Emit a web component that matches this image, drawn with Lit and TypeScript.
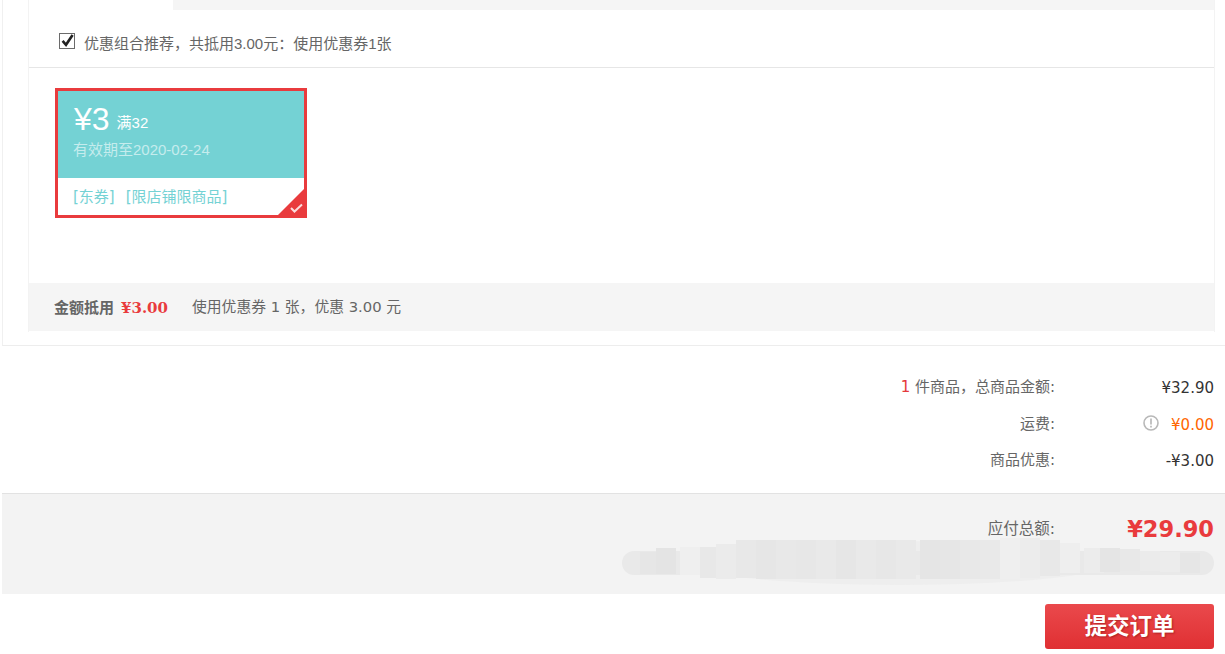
import { LitElement, html, css } from "lit";
import { customElement } from "lit/decorators.js";

// Mosaic columns of the blurred area: [left, top, height, colour]
const columns: [number, number, number, string][] = [
  [640, 552, 22, "#e6e6e6"], [656, 548, 26, "#e4e4e4"], [680, 547, 28, "#efefef"],
  [700, 547, 31, "#e8e8e8"], [716, 544, 35, "#ebebeb"], [736, 540, 38, "#e8e8e8"],
  [756, 540, 39, "#e6e6e6"], [776, 540, 39, "#e8e8e8"], [796, 540, 39, "#e7e7e7"],
  [816, 540, 39, "#e9e9e9"], [836, 540, 39, "#e6e6e6"], [856, 540, 39, "#e9e9e9"],
  [876, 540, 39, "#e7e7e7"], [896, 540, 39, "#e9e9e9"], [920, 540, 39, "#e5e5e5"],
  [940, 540, 39, "#e6e6e6"], [960, 540, 39, "#e8e8e8"], [980, 540, 39, "#e9e9e9"],
  [1000, 538, 41, "#efefef"], [1020, 538, 40, "#ececec"], [1040, 540, 36, "#e8e8e8"],
  [1060, 543, 30, "#eeeeee"], [1084, 548, 25, "#ececec"], [1100, 548, 24, "#e5e5e5"],
  [1120, 549, 22, "#e8e8e8"], [1140, 551, 20, "#ebebeb"], [1160, 552, 20, "#ececec"],
  [1180, 553, 20, "#e6e6e6"],
];

@customElement("app-root")
export class AppRoot extends LitElement {
  static styles = css`
    :host {
      display: block;
      width: 1225px;
      height: 654px;
      overflow: hidden;
      background: #fff;
      font-family: "DejaVu Sans", "Noto Sans CJK SC", sans-serif;
      font-size: 15px;
      color: #666;
      position: relative;
    }
    .panel {
      margin-left: 2px;
      height: 346px;
      box-sizing: border-box;
      border-left: 1px solid #f0f0f0;
      border-bottom: 1px solid #ededed;
      padding-left: 25px;
      padding-right: 10px;
    }
    .inner {
      height: 332px;
      box-sizing: border-box;
      border-left: 1px solid #f3f3f3;
      border-right: 1px solid #f3f3f3;
      display: flex;
      flex-direction: column;
    }
    .tabs { height: 10px; margin-left: 144px; background: #f5f5f5; flex: none; }
    .combo {
      height: 58px;
      flex: none;
      box-sizing: border-box;
      border-bottom: 1px solid #e6e6e6;
      display: flex;
      align-items: center;
      padding-left: 30px;
      padding-top: 7px;
      gap: 9px;
      font-family: "Liberation Sans", "Noto Sans CJK SC", sans-serif;
    }
    .check { width: 16px; height: 16px; display: block; margin-top: -3px; }
    .coupons { flex: 1; padding: 20px 0 0 26px; }
    .coupon {
      width: 252px;
      height: 130px;
      box-sizing: border-box;
      border: 3px solid #e93b3d;
      position: relative;
      font-family: "Liberation Sans", "Noto Sans CJK SC", sans-serif;
    }
    .c-top {
      height: 87px;
      box-sizing: border-box;
      background: #74d2d4;
      padding: 9px 0 0 16px;
      color: #fff;
    }
    .c-amount { display: flex; align-items: baseline; gap: 7px; height: 39px; }
    .c-big { font-size: 32px; line-height: 39px; }
    .c-min { font-size: 15px; position: relative; top: -2px; }
    .c-date { color: #c5eced; font-size: 15px; line-height: 20px; margin-top: 1px; margin-left: -1px; }
    .c-bottom {
      display: flex;
      gap: 11px;
      padding: 9px 0 0 15px;
      color: #74d2d4;
      font-family: "DejaVu Sans", "Noto Sans CJK SC", sans-serif;
      font-size: 15px;
      line-height: 20px;
    }
    .corner { position: absolute; right: 0; bottom: 0; width: 26px; height: 26px; display: block; }
    .sum {
      height: 48px;
      flex: none;
      background: #f5f5f5;
      display: flex;
      align-items: center;
      padding-left: 25px;
      margin-bottom: 1px;
      font-size: 14.8px;
      line-height: 20px;
    }
    .sum b { font-weight: 700; color: #666; font-family: "Noto Sans CJK SC", sans-serif; font-size: 15px; }
    .sum .money {
      color: #e93b3d;
      font-weight: 700;
      font-size: 15px;
      font-family: "DejaVu Serif", serif;
      margin: 0 24px 0 7px;
      position: relative;
      top: 1px;
    }
    .rows { padding: 23px 11px 0 0; height: 147px; box-sizing: border-box; }
    .row { display: flex; justify-content: flex-end; align-items: center; height: 36.5px; line-height: 20px; }
    .row .label { text-align: right; }
    .row .val { width: 159px; display: flex; justify-content: flex-end; align-items: center; color: #333; position: relative; top: 1px; }
    .row .orange { color: #ff6600; }
    .row em { font-style: normal; color: #e4393c; }
    .info { width: 16px; height: 16px; display: block; margin-right: 12px; position: relative; top: -2px; }
    .total {
      margin-left: 2px;
      height: 101px;
      box-sizing: border-box;
      border-top: 1px solid #e2e2e2;
      background: #f3f3f3;
      padding: 18px 11px 0 0;
      display: flex;
      justify-content: flex-end;
      align-items: flex-start;
    }
    .total .label { line-height: 34px; font-size: 15.5px; color: #666; }
    .total .amt {
      width: 159px;
      text-align: right;
      color: #e93b3d;
      font-size: 22.5px;
      font-weight: 700;
      line-height: 34px;
    }
    .blur { position: absolute; left: 0; top: 0; }
    .blur-base {
      position: absolute;
      left: 622px;
      top: 551px;
      width: 592px;
      height: 24px;
      border-radius: 12px;
      background: #e9e9e9;
    }
    .blur-soft {
      position: absolute;
      left: 690px;
      top: 541px;
      width: 420px;
      height: 44px;
      border-radius: 50%;
      background: #eeeeee;
    }
    .blur-col { position: absolute; width: 20px; }
    .actions { display: flex; justify-content: flex-end; padding: 10px 11px 0 0; }
    .submit {
      width: 169px;
      height: 45px;
      box-sizing: border-box;
      border: none;
      border-radius: 3px;
      background: linear-gradient(#ea494c, #e03033);
      color: #fff;
      font-family: "Noto Sans CJK SC", sans-serif;
      font-size: 22.5px;
      font-weight: 700;
      line-height: 40px;
      text-shadow: 1px 1px 2px rgba(110, 0, 0, 0.45);
      padding: 0 0 5px;
    }
  `;

  render() {
    return html`
      <div class="panel">
        <div class="inner">
          <div class="tabs"></div>
          <div class="combo">
            <svg class="check" viewBox="0 0 16 16">
              <rect x="0.5" y="0.5" width="15" height="15" fill="#fff" stroke="#6b6b6b"></rect>
              <path d="M3.6 7.8 L7 11.8 L13.6 2" fill="none" stroke="#222" stroke-width="2.6"></path>
            </svg>
            <span>优惠组合推荐，共抵用3.00元：使用优惠券1张</span>
          </div>
          <div class="coupons">
            <div class="coupon">
              <div class="c-top">
                <div class="c-amount"><span class="c-big">¥3</span><span class="c-min">满32</span></div>
                <div class="c-date">有效期至2020-02-24</div>
              </div>
              <div class="c-bottom"><span>[东券]</span><span>[限店铺限商品]</span></div>
              <svg class="corner" viewBox="0 0 26 26">
                <path d="M26 0 V26 H0 Z" fill="#e93b3d"></path>
                <path d="M13 19 L16.5 22.5 L24 15.5" fill="none" stroke="#fbdcdc" stroke-width="2"></path>
              </svg>
            </div>
          </div>
          <div class="sum">
            <b>金额抵用</b><span class="money">¥3.00</span><span>使用优惠券 1 张，优惠 3.00 元</span>
          </div>
        </div>
      </div>
      <div class="rows">
        <div class="row">
          <span class="label"><em>1</em> 件商品，总商品金额:</span><span class="val">¥32.90</span>
        </div>
        <div class="row">
          <span class="label">运费:</span>
          <span class="val orange">
            <svg class="info" viewBox="0 0 16 16">
              <circle cx="8" cy="8" r="7" fill="#fff" stroke="#b8b8b8" stroke-width="1.6"></circle>
              <path d="M8 3.6 V9.4 M8 10.8 V12.4" stroke="#b0b0b0" stroke-width="1.5"></path>
            </svg>
            ¥0.00
          </span>
        </div>
        <div class="row">
          <span class="label">商品优惠:</span><span class="val">-¥3.00</span>
        </div>
      </div>
      <div class="total">
        <span class="label">应付总额:</span><span class="amt">¥29.90</span>
      </div>
      <div class="blur">
        <div class="blur-soft"></div>
        <div class="blur-base"></div>
        ${columns.map(
          ([l, t, h, c]) =>
            html`<div class="blur-col" style="left:${l}px;top:${t}px;height:${h}px;background:${c}"></div>`
        )}
      </div>
      <div class="actions"><button class="submit">提交订单</button></div>
    `;
  }
}
